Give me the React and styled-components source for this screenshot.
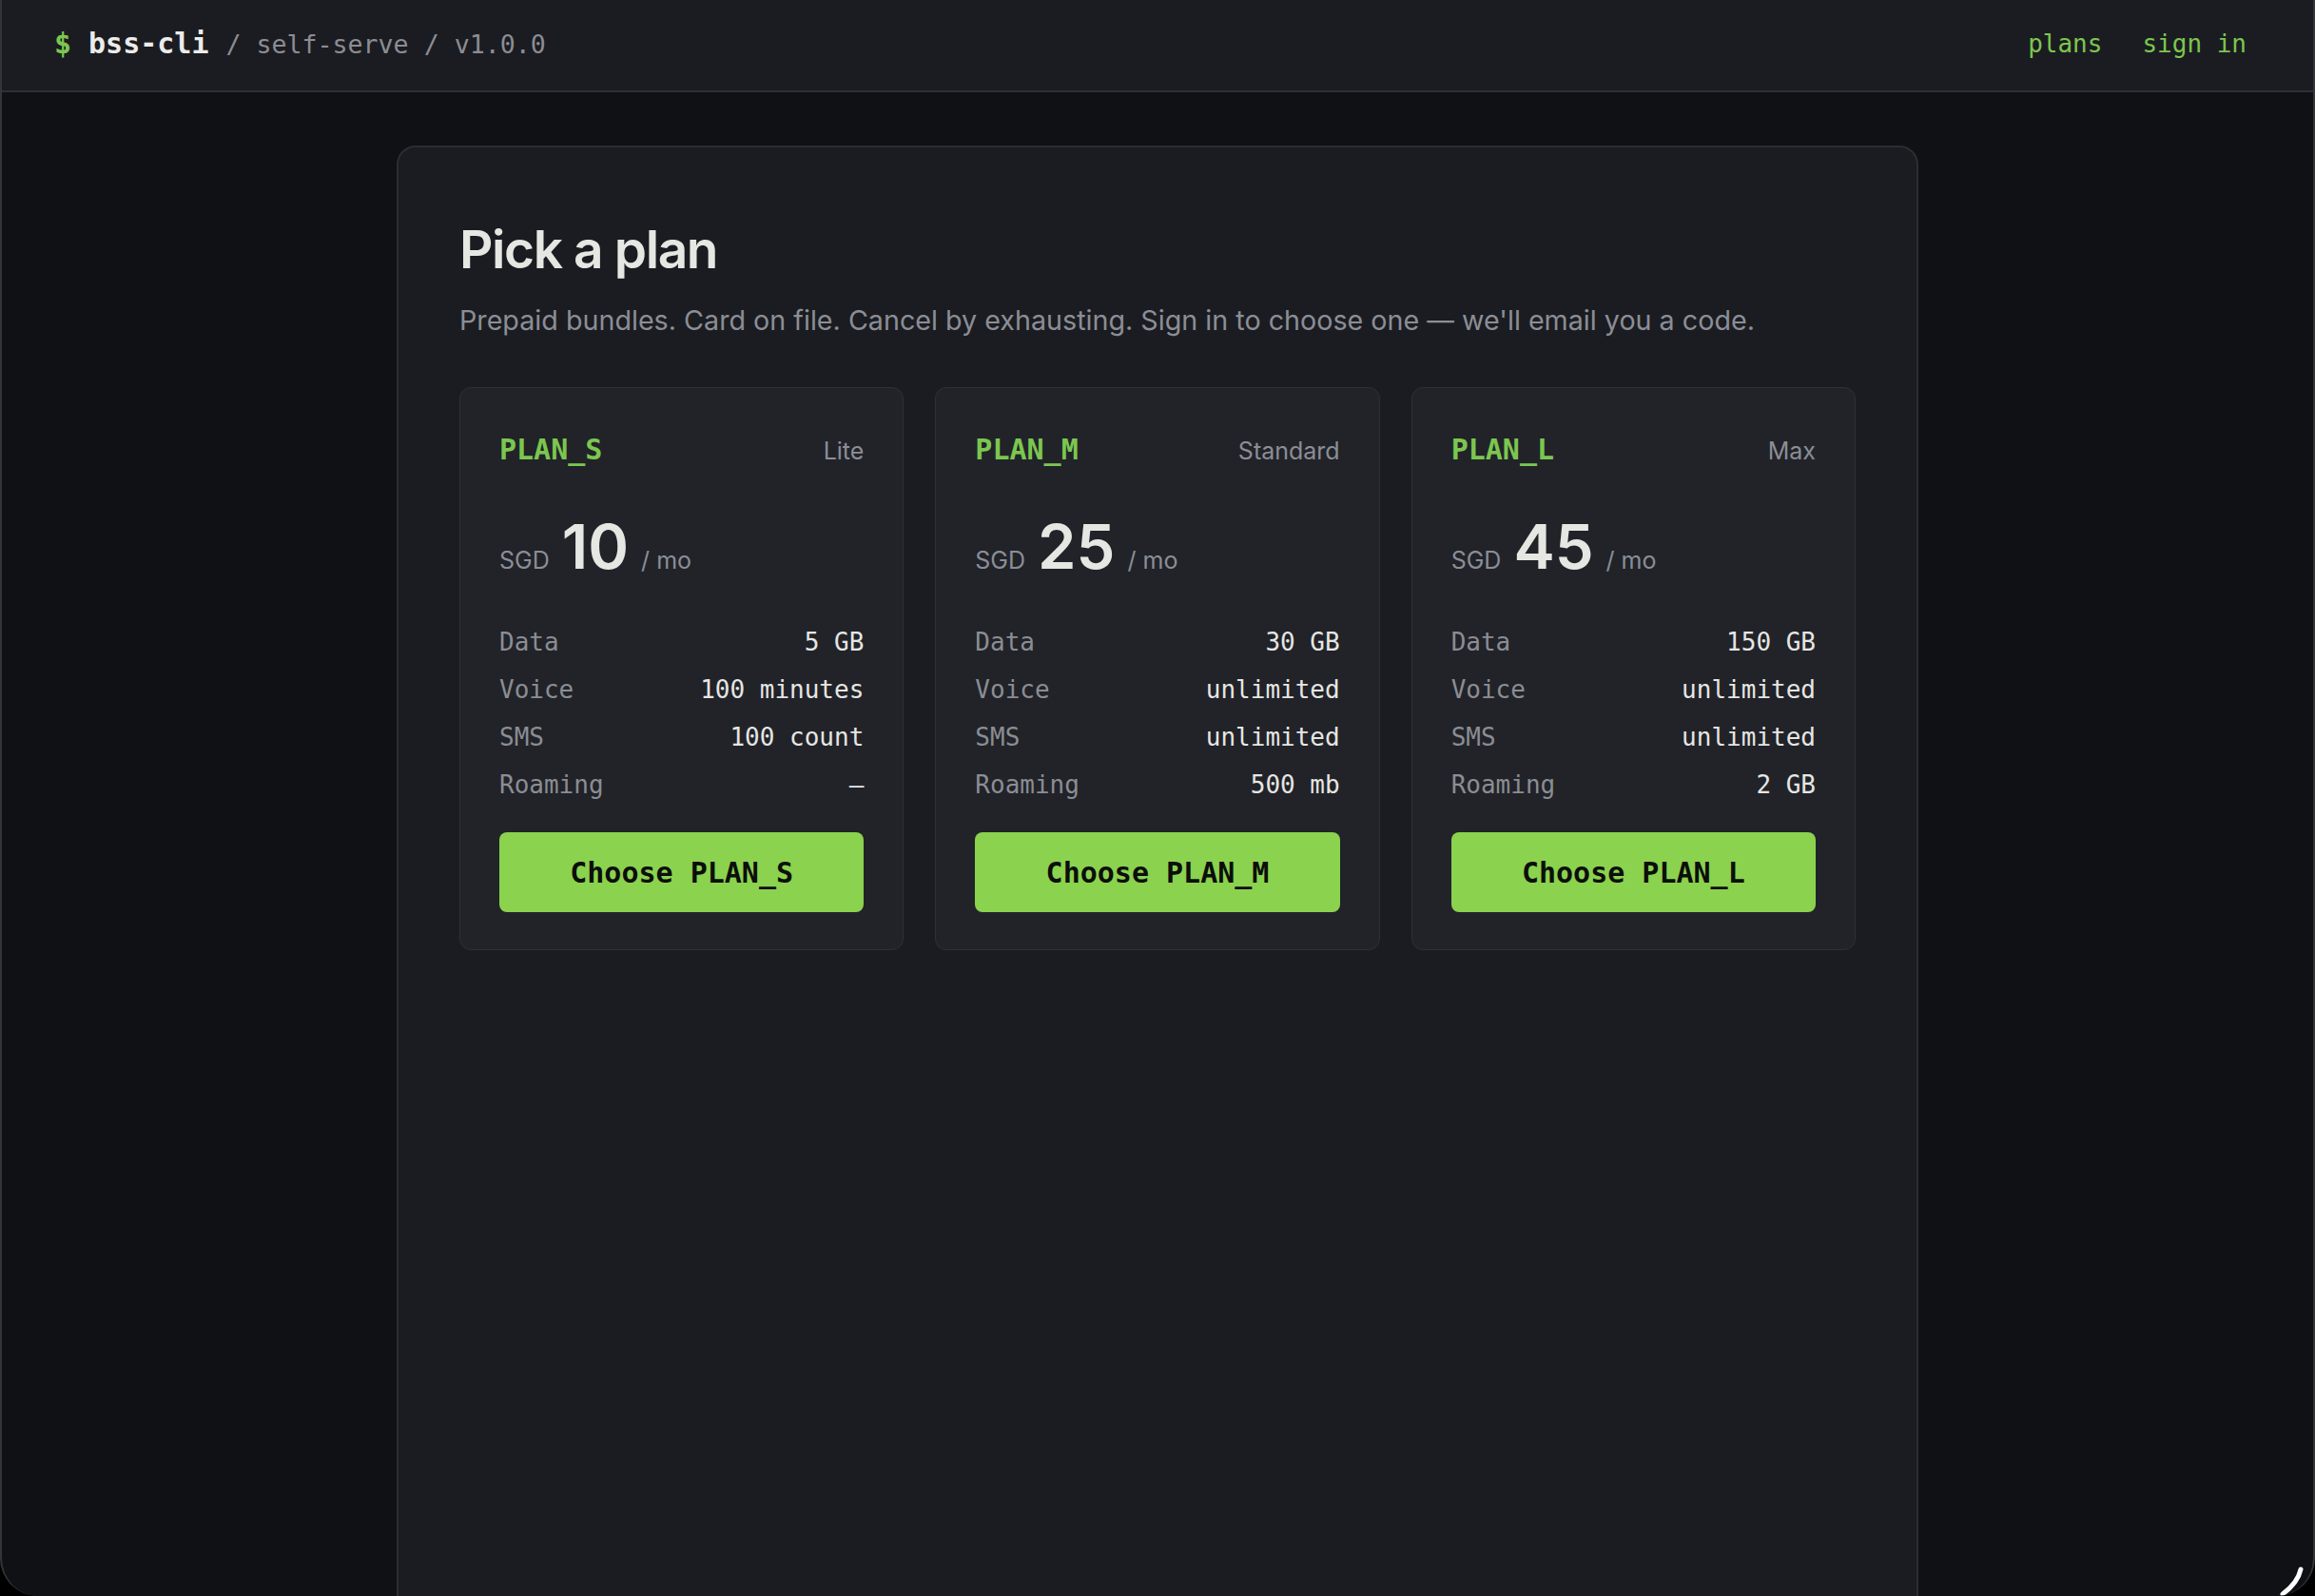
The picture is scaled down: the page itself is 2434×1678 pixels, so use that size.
import React from 'react'
import styled, { createGlobalStyle } from 'styled-components'

const GlobalStyle = createGlobalStyle`
html, body {
  margin: 0;
  padding: 0;
  background: #000;
}
* { box-sizing: border-box; }
`

const mono = `"DejaVu Sans Mono", "Liberation Mono", monospace`
const sans = `Inter, "Noto Sans", sans-serif`

const Frame = styled.div`
position: relative;
height: 100vh;
overflow: hidden;
background: #101115;
border-left: 2px solid #34353b;
border-right: 2px solid #34353b;
border-bottom-left-radius: 40px;
border-bottom-right-radius: 40px;
display: flex;
flex-direction: column;
`

const Header = styled.header`
height: 97px;
flex-shrink: 0;
display: flex;
align-items: center;
justify-content: space-between;
padding: 0 70px 4px 55px;
background: #1b1c21;
border-bottom: 2px solid #2f3036;
font-family: ${mono};
`

const Brand = styled.div`
display: flex;
align-items: baseline;
`

const Prompt = styled.span`
color: #7cc650;
font-weight: 700;
font-size: 30px;
margin-right: 18px;
`

const AppName = styled.span`
color: #ececea;
font-weight: 700;
font-size: 30px;
`

const Crumbs = styled.span`
color: #8b8d94;
font-size: 26.6px;
margin-left: 18px;
`

const Nav = styled.nav`
display: flex;
gap: 42px;
`

const NavLink = styled.a`
color: #7cc650;
font-size: 26px;
text-decoration: none;
`

const Main = styled.main`
flex: 1;
display: flex;
justify-content: center;
padding-top: 56px;
`

const Panel = styled.section`
width: 1600px;
min-height: 1600px;
background: #1b1c21;
border: 2px solid #2c2d33;
border-radius: 20px;
padding: 74px 64px 0;
`

const Title = styled.h1`
margin: 0;
font-family: ${sans};
font-weight: 600;
font-size: 55px;
line-height: 66px;
letter-spacing: -1.4px;
color: #e6e6e2;
`

const Lead = styled.p`
margin: 22px 0 0;
font-family: ${sans};
font-size: 28.7px;
line-height: 39px;
color: #8b8e96;
`

const Grid = styled.div`
margin-top: 51px;
display: grid;
grid-template-columns: repeat(3, 1fr);
gap: 33px;
`

const Card = styled.article`
background: #212329;
border: 1px solid #2e3037;
border-radius: 12px;
padding: 47px 41px 39px;
display: flex;
flex-direction: column;
`

const CardHead = styled.div`
display: flex;
justify-content: space-between;
align-items: baseline;
line-height: 36px;
`

const Code = styled.span`
font-family: ${mono};
font-weight: 700;
font-size: 30px;
color: #7cc650;
`

const Tier = styled.span`
font-family: ${sans};
font-size: 25px;
color: #8b8e96;
`

const Price = styled.div`
margin-top: 52px;
display: flex;
align-items: baseline;
gap: 13px;
font-family: ${sans};
line-height: 62px;
`

const Currency = styled.span`
font-size: 25px;
color: #8b8e96;
`

const Amount = styled.span`
font-size: 65px;
font-weight: 600;
color: #e6e6e2;
`

const Per = styled.span`
font-size: 25px;
color: #8b8e96;
`

const Specs = styled.dl`
margin: 30px 0 0;
display: flex;
flex-direction: column;
`

const Spec = styled.div`
display: flex;
justify-content: space-between;
align-items: baseline;
font-family: ${mono};
font-size: 26px;
line-height: 50px;
`

const Label = styled.dt`
color: #8b8d93;
`

const Value = styled.dd`
margin: 0;
color: #e6e6e3;
`

const Choose = styled.button`
margin-top: 25px;
height: 84px;
border: none;
border-radius: 8px;
background: #8bd24f;
color: #0c0e0b;
font-family: ${mono};
font-weight: 700;
font-size: 30px;
cursor: pointer;
`

const Cursor = styled.svg`
position: absolute;
right: 4px;
bottom: -4px;
width: 40px;
height: 40px;
`

const plans = [
  { code: 'PLAN_S', tier: 'Lite', price: 10, data: '5 GB', voice: '100 minutes', sms: '100 count', roaming: '—' },
  { code: 'PLAN_M', tier: 'Standard', price: 25, data: '30 GB', voice: 'unlimited', sms: 'unlimited', roaming: '500 mb' },
  { code: 'PLAN_L', tier: 'Max', price: 45, data: '150 GB', voice: 'unlimited', sms: 'unlimited', roaming: '2 GB' },
]

const PlanCard = ({ plan }) => (
  <Card>
    <CardHead>
      <Code>{plan.code}</Code>
      <Tier>{plan.tier}</Tier>
    </CardHead>
    <Price>
      <Currency>SGD</Currency>
      <Amount>{plan.price}</Amount>
      <Per>/ mo</Per>
    </Price>
    <Specs>
      <Spec><Label>Data</Label><Value>{plan.data}</Value></Spec>
      <Spec><Label>Voice</Label><Value>{plan.voice}</Value></Spec>
      <Spec><Label>SMS</Label><Value>{plan.sms}</Value></Spec>
      <Spec><Label>Roaming</Label><Value>{plan.roaming}</Value></Spec>
    </Specs>
    <Choose>Choose {plan.code}</Choose>
  </Card>
)

export default function App() {
  return (
    <Frame>
      <GlobalStyle />
      <Header>
        <Brand>
          <Prompt>$</Prompt>
          <AppName>bss-cli</AppName>
          <Crumbs>/ self-serve / v1.0.0</Crumbs>
        </Brand>
        <Nav>
          <NavLink href="#plans">plans</NavLink>
          <NavLink href="#signin">sign in</NavLink>
        </Nav>
      </Header>
      <Main>
        <Panel>
          <Title>Pick a plan</Title>
          <Lead>Prepaid bundles. Card on file. Cancel by exhausting. Sign in to choose one — we'll email you a code.</Lead>
          <Grid>
            {plans.map(p => <PlanCard key={p.code} plan={p} />)}
          </Grid>
        </Panel>
      </Main>
      <Cursor viewBox="0 0 40 40">
        <path d="M31 8 Q28 22 12 34" fill="none" stroke="#fff" strokeWidth="5" strokeLinecap="round" />
      </Cursor>
    </Frame>
  )
}
